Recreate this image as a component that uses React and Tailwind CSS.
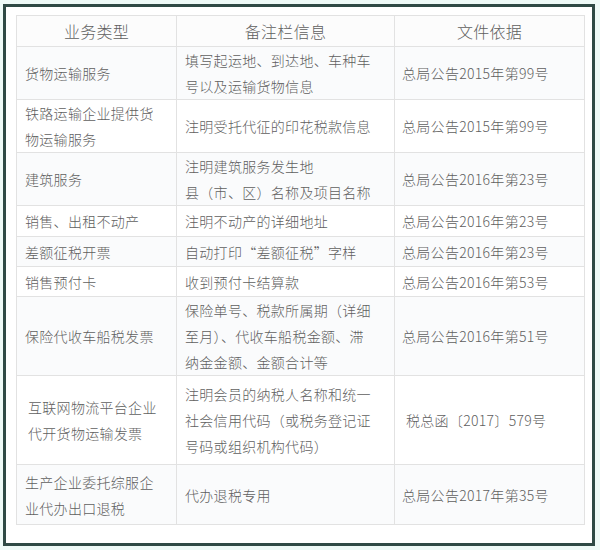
const rows = [
  { h: 53, type: ['货物运输服务'], note: ['填写起运地、到达地、车种车', '号以及运输货物信息'], doc: '总局公告2015年第99号' },
  { h: 53, type: ['铁路运输企业提供货', '物运输服务'], note: ['注明受托代征的印花税款信息'], doc: '总局公告2015年第99号' },
  { h: 53, type: ['建筑服务'], note: ['注明建筑服务发生地', '县（市、区）名称及项目名称'], doc: '总局公告2016年第23号' },
  { h: 31, type: ['销售、出租不动产'], note: ['注明不动产的详细地址'], doc: '总局公告2016年第23号' },
  { h: 30, type: ['差额征税开票'], note: ['自动打印“差额征税”字样'], doc: '总局公告2016年第23号' },
  { h: 30, type: ['销售预付卡'], note: ['收到预付卡结算款'], doc: '总局公告2016年第53号' },
  { h: 78, type: ['保险代收车船税发票'], note: ['保险单号、税款所属期（详细', '至月）、代收车船税金额、滞', '纳金金额、金额合计等'], doc: '总局公告2016年第51号' },
  { h: 89, type: ['互联网物流平台企业', '代开货物运输发票'], note: ['注明会员的纳税人名称和统一', '社会信用代码（或税务登记证', '号码或组织机构代码）'], doc: '税总函〔2017〕579号', indent: true },
  { h: 60, type: ['生产企业委托综服企', '业代办出口退税'], note: ['代办退税专用'], doc: '总局公告2017年第35号' },
];

function Lines({ items }) {
  return items.map((t, i) => (
    <div key={i} className="whitespace-nowrap">{t}</div>
  ));
}

export default function App() {
  return (
    <div
      className="w-[600px] h-[550px] bg-[#eefaf7] pt-[4px] pl-[3px] pr-[5px] pb-[4px]"
      style={{ fontFamily: '"Noto Sans CJK SC", "Noto Sans", sans-serif' }}
    >
      <div className="h-full border-[3px] border-[#2f4a45] bg-white pt-[8px] pl-[10px]">
        <table className="border-collapse text-[#5f5f5f] font-light text-[14px] tracking-[0.3px] leading-[26px]">
          <colgroup>
            <col className="w-[160px]" />
            <col className="w-[218px]" />
            <col className="w-[190px]" />
          </colgroup>
          <thead>
            <tr className="h-[31px] bg-[#fcfcfc]">
              <th className="border border-[#e2e2e2] font-light text-[16px] text-center">业务类型</th>
              <th className="border border-[#e2e2e2] font-light text-[16px] text-center">备注栏信息</th>
              <th className="border border-[#e2e2e2] font-light text-[16px] text-center">文件依据</th>
            </tr>
          </thead>
          <tbody>
            {rows.map((r, i) => (
              <tr key={i} className={i % 2 === 0 ? 'bg-[#fafbfc]' : 'bg-white'} style={{ height: r.h }}>
                <td className={`border border-[#e2e2e2] align-middle ${r.indent ? 'pl-[11px]' : 'pl-[8px]'}`}>
                  <Lines items={r.type} />
                </td>
                <td className="border border-[#e2e2e2] align-middle pl-[8px]">
                  <Lines items={r.note} />
                </td>
                <td className={`border border-[#e2e2e2] align-middle ${r.indent ? 'pl-[11px]' : 'pl-[7px]'}`}>
                  {r.doc}
                </td>
              </tr>
            ))}
          </tbody>
        </table>
      </div>
    </div>
  );
}
